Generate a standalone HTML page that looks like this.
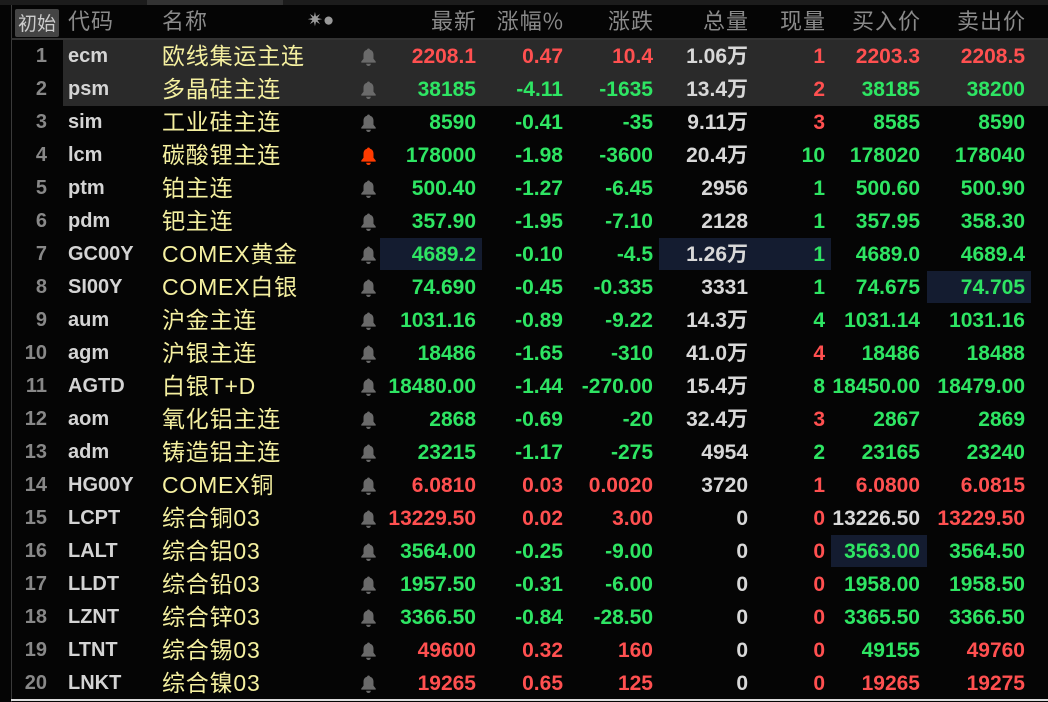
<!DOCTYPE html>
<html><head><meta charset="utf-8"><style>
*{margin:0;padding:0;box-sizing:border-box}
body{width:1048px;height:702px;background:#050505;position:relative;overflow:hidden;font-family:"Liberation Sans","Noto Sans CJK SC",sans-serif}
.t{position:absolute;white-space:nowrap}
.h{color:#8a8a8a;font-size:22px;top:4px;letter-spacing:1px;font-family:"Noto Sans CJK SC","Liberation Sans",sans-serif}
.row{position:absolute;left:0;width:1048px;height:33px}
.c{position:absolute;top:0;height:33px;line-height:33px;font-size:21px;letter-spacing:0;font-weight:bold;white-space:nowrap}
.r{color:#ff5050}.g{color:#2ee563}.w{color:#d8d8d8}
.num{color:#888;right:1001px;font-size:20px}
.code{left:68px;color:#d4d4d4;font-size:20px}
.name{left:162px;color:#f5f0a0;font-weight:normal;font-size:23px;letter-spacing:0.8px;font-family:"Liberation Sans","Noto Sans CJK SC",sans-serif}
.hl{position:absolute;background:#141c30}
</style></head><body>
<div style="position:absolute;left:0;top:0;width:1048px;height:5px;background:#1c1c1c"></div>
<div style="position:absolute;left:147px;top:0;width:136px;height:5px;background:#333"></div>
<div style="position:absolute;left:11px;top:5px;width:1px;height:697px;background:#3a3a3a"></div>
<div style="position:absolute;left:11px;top:38px;width:1037px;height:2px;background:#333"></div>
<div style="position:absolute;left:11px;top:699px;width:1037px;height:2px;background:#ddd"></div>
<div style="position:absolute;left:15px;top:9px;width:44px;height:28px;background:#444;border-radius:2px;color:#ccc;font-size:19px;line-height:28px;text-align:center;font-family:'Noto Sans CJK SC',sans-serif">初始</div>
<div class="t h" style="left:68px">代码</div>
<div class="t h" style="left:162px">名称</div>
<div class="t" style="left:307px;top:9px;color:#999;font-size:19px">✷●</div>
<div class="t h" style="right:571px">最新</div>
<div class="t h" style="right:484px">涨幅%</div>
<div class="t h" style="right:394px">涨跌</div>
<div class="t h" style="right:299px">总量</div>
<div class="t h" style="right:222px">现量</div>
<div class="t h" style="right:127px">买入价</div>
<div class="t h" style="right:22px">卖出价</div>
<div style="position:absolute;left:63px;top:40px;width:985px;height:66px;background:#2a2a2a"></div>
<div class="hl" style="left:380px;top:238px;width:102px;height:32px"></div>
<div class="hl" style="left:659px;top:238px;width:172px;height:32px"></div>
<div class="hl" style="left:927px;top:271px;width:104px;height:32px"></div>
<div class="hl" style="left:831px;top:535px;width:96px;height:32px"></div>
<div id="rows"></div>
<script>
var D=[
["ecm","欧线集运主连","2208.1r","0.47r","10.4r","1.06万","1r","2203.3r","2208.5r"],
["psm","多晶硅主连","38185g","-4.11g","-1635g","13.4万","2r","38185g","38200g"],
["sim","工业硅主连","8590g","-0.41g","-35g","9.11万","3r","8585g","8590g"],
["lcm","碳酸锂主连","178000g","-1.98g","-3600g","20.4万","10g","178020g","178040g",1],
["ptm","铂主连","500.40g","-1.27g","-6.45g","2956","1g","500.60g","500.90g"],
["pdm","钯主连","357.90g","-1.95g","-7.10g","2128","1g","357.95g","358.30g"],
["GC00Y","COMEX黄金","4689.2g","-0.10g","-4.5g","1.26万","1g","4689.0g","4689.4g"],
["SI00Y","COMEX白银","74.690g","-0.45g","-0.335g","3331","1g","74.675g","74.705g"],
["aum","沪金主连","1031.16g","-0.89g","-9.22g","14.3万","4g","1031.14g","1031.16g"],
["agm","沪银主连","18486g","-1.65g","-310g","41.0万","4r","18486g","18488g"],
["AGTD","白银T+D","18480.00g","-1.44g","-270.00g","15.4万","8g","18450.00g","18479.00g"],
["aom","氧化铝主连","2868g","-0.69g","-20g","32.4万","3r","2867g","2869g"],
["adm","铸造铝主连","23215g","-1.17g","-275g","4954","2g","23165g","23240g"],
["HG00Y","COMEX铜","6.0810r","0.03r","0.0020r","3720","1r","6.0800r","6.0815r"],
["LCPT","综合铜03","13229.50r","0.02r","3.00r","0","0r","13226.50w","13229.50r"],
["LALT","综合铝03","3564.00g","-0.25g","-9.00g","0","0r","3563.00g","3564.50g"],
["LLDT","综合铅03","1957.50g","-0.31g","-6.00g","0","0r","1958.00g","1958.50g"],
["LZNT","综合锌03","3366.50g","-0.84g","-28.50g","0","0r","3365.50g","3366.50g"],
["LTNT","综合锡03","49600r","0.32r","160r","0","0r","49155g","49760r"],
["LNKT","综合镍03","19265r","0.65r","125r","0","0r","19265r","19275r"]];
var R=[572,485,395,300,223,128,23];
var h="";
D.forEach(function(d,i){
 var top=40+i*33;
 h+='<div class="row" style="top:'+top+'px">';
 h+='<div class="c num">'+(i+1)+'</div>';
 h+='<div class="c code">'+d[0]+'</div>';
 h+='<div class="c name">'+d[1]+'</div>';
 var bc=d[9]?"#ff3b00":"#6a6a6a";
 h+='<svg style="position:absolute;left:360px;top:7px" width="17" height="20" viewBox="0 0 16 18"><path d="M8 1c.9 0 1.3.5 1.3 1.1 2.3.7 3.4 2.4 3.4 4.8v3.7l2.1 2.6v1.1H1.2v-1.1l2.1-2.6V6.9c0-2.4 1.1-4.1 3.4-4.8C6.7 1.5 7.1 1 8 1z" fill="'+bc+'"/><path d="M5.8 15.3h4.4a2.2 2.2 0 0 1-4.4 0z" fill="'+bc+'"/></svg>';
 for(var k=0;k<7;k++){
  var v=d[k+2],cl="w";
  var last=v.slice(-1);
  if(last=="r"||last=="g"||last=="w"){cl=last;v=v.slice(0,-1);}
  h+='<div class="c '+cl+'" style="right:'+R[k]+'px">'+v+'</div>';
 }
 h+='</div>';
});
document.getElementById("rows").innerHTML=h;
</script>
</body></html>
